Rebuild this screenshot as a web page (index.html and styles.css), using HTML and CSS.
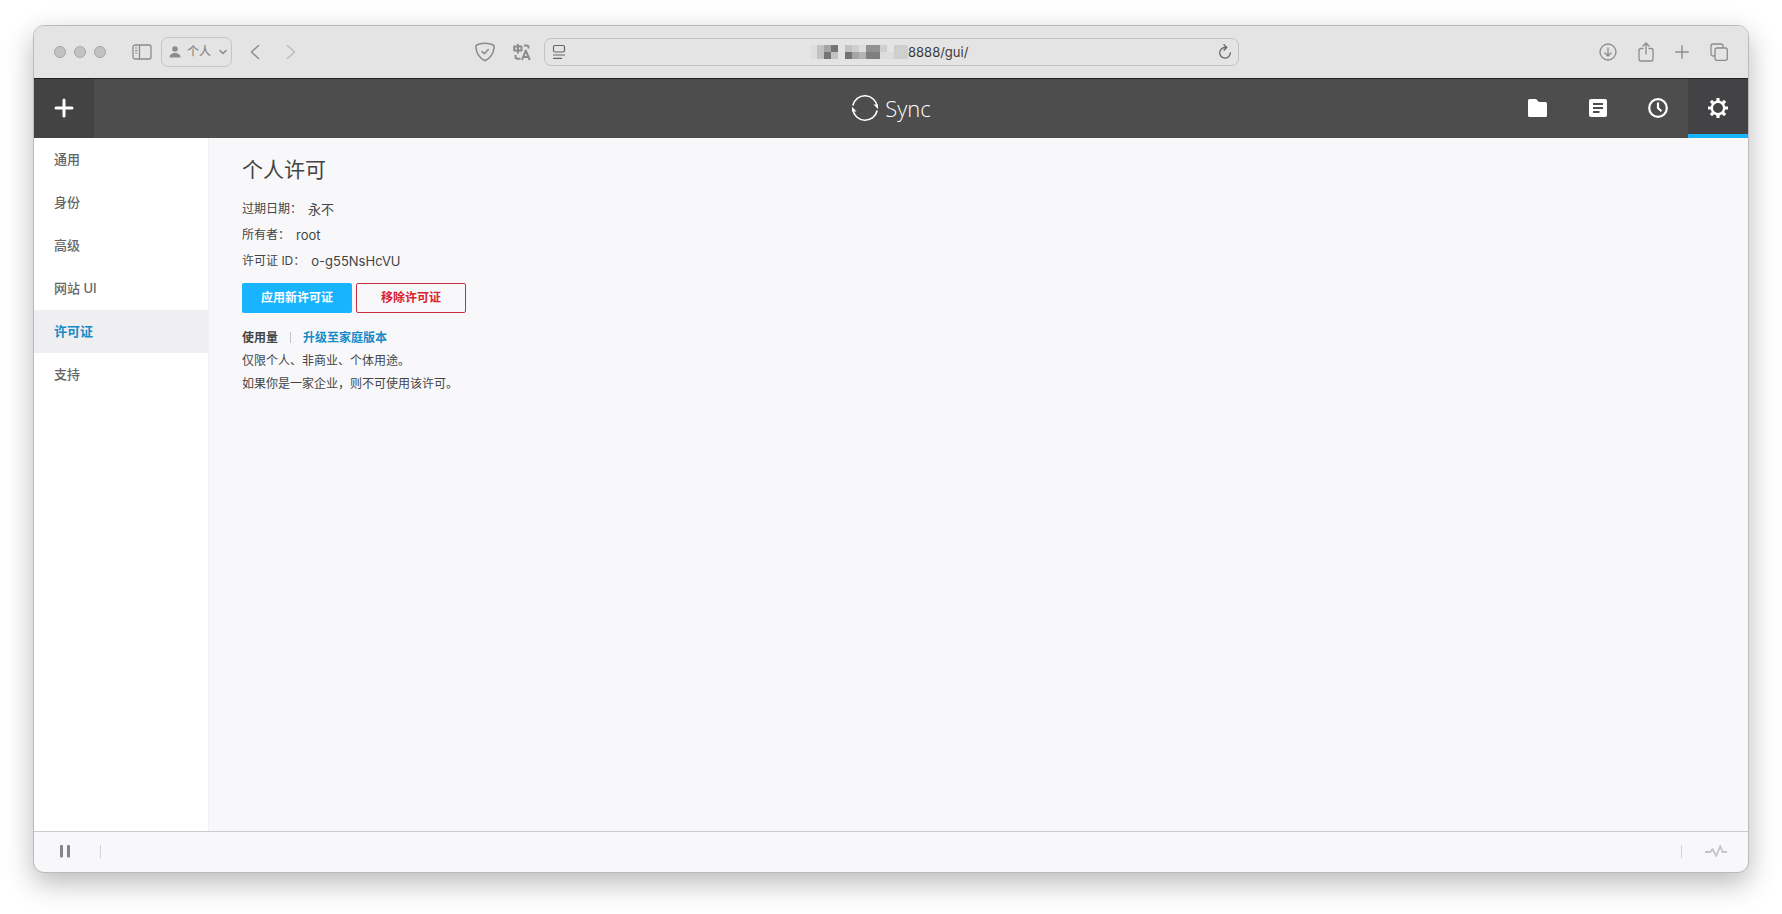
FILE: index.html
```html
<!DOCTYPE html>
<html lang="zh-CN">
<head>
<meta charset="utf-8">
<meta name="viewport" content="width=device-width, initial-scale=1">
<title>Sync</title>
<link rel="stylesheet" href="styles.css">
</head>
<body>
<div class="window">
  <header class="chrome">
    <div class="chrome-left">
      <div class="lights"><span class="light"></span><span class="light"></span><span class="light"></span></div>
      <button class="tool panel-toggle" type="button" aria-label="边栏">
        <svg width="20" height="16" viewBox="0 0 20 16" fill="none" stroke="currentColor"><rect x="1" y="1" width="18" height="14" rx="2" stroke-width="1.3"/><path d="M7.5 1v14" stroke-width="1.3"/><path d="M3 4h2.500M3 6.500h2.500M3 9h2.500"/></svg>
      </button>
      <button class="profile" type="button">
        <svg width="12" height="12" viewBox="0 0 12 12" fill="currentColor"><circle cx="6" cy="3" r="2.800"/><path d="M.5 11.500C.5 8.500 3 7 6 7s5.500 1.500 5.500 4.500z"/></svg>
        <span>个人</span>
        <svg class="caret" width="8" height="6" viewBox="0 0 8 6" fill="none" stroke="currentColor" stroke-width="1.5" stroke-linecap="round" stroke-linejoin="round"><path d="M1 1.500l3 3 3-3"/></svg>
      </button>
      <button class="tool back" type="button" aria-label="后退">
        <svg width="10" height="16" viewBox="0 0 10 16" fill="none" stroke="currentColor" stroke-width="1.5" stroke-linecap="round" stroke-linejoin="round"><path d="M8.500 1.500L1.500 8l7 6.500"/></svg>
      </button>
      <button class="tool forward" type="button" aria-label="前进" disabled>
        <svg width="10" height="16" viewBox="0 0 10 16" fill="none" stroke="currentColor" stroke-width="1.5" stroke-linecap="round" stroke-linejoin="round"><path d="M1.500 1.500L8.500 8l-7 6.500"/></svg>
      </button>
      <div class="extensions">
        <button class="tool" type="button" aria-label="隐私">
          <svg width="20" height="20" viewBox="0 0 20 20" fill="none" stroke="currentColor" stroke-width="1.600" stroke-linecap="round" stroke-linejoin="round"><path d="M10 1.200C7 1.200 3.800 1.800 1.800 3 .8 3.600.8 4.200.9 5.500 1.500 11.500 4.500 16 10 18.800c5.500-2.800 8.500-7.300 9.100-13.300.1-1.300.1-1.900-.9-2.500C16.200 1.800 13 1.200 10 1.200z"/><path d="M7 9.500l2.300 2.300L13.300 7.500"/></svg>
        </button>
        <button class="tool" type="button" aria-label="翻译">
          <svg width="18" height="18" viewBox="0 0 18 18" fill="none" stroke="currentColor" stroke-width="2" stroke-linejoin="round"><path d="M1.200 3.500h7.300v4H1.200zM4.900 1v9.500M11 2.500h2.500Q15.500 2.500 15.500 4.500v1M2.500 12v1.500Q2.500 15.800 4.500 15.800H7.500M9 17l3.700-9.500L16.800 17M10.300 14h5.200"/></svg>
        </button>
      </div>
    </div>
    <div class="address">
      <svg class="reader" width="14" height="16" viewBox="0 0 14 16" fill="none" stroke="currentColor" stroke-width="1.200" stroke-linecap="round"><rect x="1.500" y="1.500" width="11" height="6.500" rx="1.500"/><path d="M1.500 11h11M1.500 14.400h8"/></svg>
      <div class="location">
        <svg width="97" height="14" viewBox="0 0 97 14" shape-rendering="crispEdges"><path fill="#ddd" d="M0 0h6v14H0zM48 0h7v7h-7zM69 7h14v7H69z"/><path fill="#c2c2c2" d="M6 0h7v14H6zM20 7h7v7h-7zM34 0h7v7h-7z"/><path fill="#a5a5a5" d="M13 0h7v7h-7zM41 7h7v7h-7z"/><path fill="#747474" d="M20 0h7v7h-7zM13 7h7v7h-7zM34 7h7v7h-7z"/><path fill="#b4b4b4" d="M48 7h7v7h-7z"/><path fill="#929292" d="M55 0h14v7H55z"/><path fill="#7f7f7f" d="M55 7h14v7H55z"/><path fill="#cfcfcf" d="M41 0h7v7h-7zM69 0h7v7h-7zM83 0h14v14H83z"/></svg>
        <input class="url" type="text" aria-label="地址" value="8888/gui/">
      </div>
      <button class="tool reload" type="button" aria-label="重新载入">
        <svg width="14" height="16" viewBox="0 0 14 16" fill="none" stroke="currentColor" stroke-width="1.300" stroke-linecap="round" stroke-linejoin="round"><path d="M8 3.500H7A5.300 5.300 0 1 0 12.300 9M6 .8l2.800 2.700L6 6.200"/></svg>
      </button>
    </div>
    <div class="chrome-right">
      <button class="tool" type="button" aria-label="下载">
        <svg width="18" height="18" viewBox="0 0 18 18" fill="none" stroke="currentColor" stroke-width="1.300" stroke-linecap="round" stroke-linejoin="round"><circle cx="9" cy="9" r="8"/><path d="M9 4.800v8M6 10l3 3 3-3"/></svg>
      </button>
      <button class="tool share" type="button" aria-label="共享">
        <svg width="16" height="20" viewBox="0 0 16 20" fill="none" stroke="currentColor" stroke-width="1.300" stroke-linecap="round" stroke-linejoin="round"><path d="M5 6.500H3a2 2 0 0 0-2 2V17a2 2 0 0 0 2 2h10a2 2 0 0 0 2-2V8.500a2 2 0 0 0-2-2h-2M8 12V1.200M5 4l3-3 3 3"/></svg>
      </button>
      <button class="tool" type="button" aria-label="新标签页">
        <svg width="14" height="14" viewBox="0 0 14 14" fill="none" stroke="currentColor" stroke-width="1.400" stroke-linecap="round"><path d="M7 .7v12.600M.7 7h12.600"/></svg>
      </button>
      <button class="tool" type="button" aria-label="标签页概览">
        <svg width="18" height="18" viewBox="0 0 18 18" fill="none" stroke="currentColor" stroke-width="1.300"><rect x="5" y="5" width="12.300" height="12.300" rx="2"/><path d="M5 13H3a2 2 0 0 1-2-2V3a2 2 0 0 1 2-2h8a2 2 0 0 1 2 2v2"/></svg>
      </button>
    </div>
  </header>

  <div class="appbar">
    <button class="add" type="button" aria-label="添加">
      <svg width="20" height="20" viewBox="0 0 20 20" stroke="currentColor" stroke-width="3" stroke-linecap="round"><path d="M10 2v16M2 10h16"/></svg>
    </button>
    <div class="brand">
      <svg width="28" height="28" viewBox="0 0 28 28" fill="none" stroke="currentColor" stroke-width="1.600"><path d="M1.800 11.500A12.400 12.400 0 0 1 26.200 12.500M26.200 16.500A12.400 12.400 0 0 1 1.800 15.500"/><path d="M22.500 10.500l4.500 0v4.500zM1 12.700v4.800h4.500z" fill="currentColor" stroke="none"/></svg>
      <span>Sync</span>
    </div>
    <nav class="tabs" aria-label="主导航">
      <a class="tab" href="#folders" aria-label="文件夹"><svg width="20" height="20" viewBox="0 0 20 20" fill="currentColor"><path d="M1.500 1H8l3 3h6.500A1.500 1.500 0 0 1 19 5.500v12a1.500 1.500 0 0 1-1.500 1.500h-16A1.500 1.500 0 0 1 0 17.500V2.500A1.500 1.500 0 0 1 1.500 1z"/></svg></a>
      <a class="tab" href="#list" aria-label="列表"><svg width="20" height="20" viewBox="0 0 20 20"><rect x="1" y="1" width="18" height="18" rx="2" fill="currentColor"/><path d="M5 6h10M5 10h10M5 14h6.500" stroke="#4d4d4d" stroke-width="1.800"/></svg></a>
      <a class="tab" href="#history" aria-label="历史"><svg width="20" height="20" viewBox="0 0 20 20" fill="none" stroke="currentColor"><circle cx="10" cy="10" r="8.800" stroke-width="2.200"/><path d="M10 4.500V10l3.500 3.300" stroke-width="2.200"/></svg></a>
      <a class="tab active" href="#settings" aria-label="设置" aria-current="page"><svg width="20" height="20" viewBox="0 0 20 20" fill="none" stroke="currentColor"><circle cx="10" cy="10" r="6.200" stroke-width="2.400"/><path d="M10 0v3M10 17v3M0 10h3M17 10h3M2.900 2.900l2.200 2.200M14.900 14.900l2.200 2.200M2.900 17.100l2.200-2.200M14.900 5.100l2.200-2.200" stroke-width="3.200"/></svg></a>
    </nav>
  </div>

  <div class="body">
    <nav class="sidebar" aria-label="设置">
      <a class="side-link" href="#general">通用</a>
      <a class="side-link" href="#identity">身份</a>
      <a class="side-link" href="#advanced">高级</a>
      <a class="side-link" href="#webui">网站 UI</a>
      <a class="side-link selected" href="#license" aria-current="page">许可证</a>
      <a class="side-link" href="#support">支持</a>
    </nav>
    <main class="content">
      <h1 class="title">个人许可</h1>
      <dl class="details">
        <div class="detail"><dt>过期日期：</dt><dd>永不</dd></div>
        <div class="detail"><dt>所有者：</dt><dd>root</dd></div>
        <div class="detail"><dt>许可证 ID：</dt><dd>o-g55NsHcVU</dd></div>
      </dl>
      <div class="actions">
        <button class="btn primary" type="button">应用新许可证</button>
        <button class="btn danger" type="button">移除许可证</button>
      </div>
      <div class="usage">
        <div class="usage-head"><strong>使用量</strong><span class="bar"></span><a class="upgrade" href="#upgrade">升级至家庭版本</a></div>
        <p>仅限个人、非商业、个体用途。</p>
        <p>如果你是一家企业，则不可使用该许可。</p>
      </div>
    </main>
  </div>

  <footer class="status">
    <div class="status-group">
      <button class="pause" type="button" aria-label="暂停"><svg width="12" height="14" viewBox="0 0 12 14" fill="currentColor"><rect x="1" y="1" width="3" height="12.500" rx="1"/><rect x="8" y="1" width="3" height="12.500" rx="1"/></svg></button>
      <span class="rule"></span>
    </div>
    <div class="status-group">
      <span class="rule"></span>
      <button class="activity" type="button" aria-label="活动"><svg width="22" height="14" viewBox="0 0 22 14" fill="none" stroke="currentColor" stroke-width="1.800" stroke-linejoin="round"><path d="M0 8h5.500L7.500 5l3.700 7L15.300 2l2.200 6H22"/></svg></button>
    </div>
  </footer>
</div>
</body>
</html>
```

FILE: styles.css
```css
* { box-sizing: border-box; }

body {
  margin: 0;
  padding: 25px 33px 41px;
  min-height: 100vh;
  display: flex;
  background: #fff;
  color: #444;
  font: 12px/22px Inter, "Noto Sans CJK SC", sans-serif;
}

button { font: inherit; color: inherit; border: 0; padding: 0; background: none; }
a { text-decoration: none; color: inherit; }
svg { display: block; flex: none; }
p, h1, dl, dd { margin: 0; }

.window {
  flex: 1;
  min-width: 0;
  display: flex;
  flex-direction: column;
  border: 1px solid #bbb;
  border-radius: 11px;
  overflow: hidden;
  background: #f8f8fa;
  box-shadow: 0 10px 28px rgba(0, 0, 0, 0.28);
}

.chrome {
  height: 53px;
  display: grid;
  grid-template-columns: 1fr minmax(0, 695px) 1fr;
  align-items: center;
  background: #e4e4e4;
  border-bottom: 1px solid #222;
  color: #8c8c8c;
}

.chrome-left { display: flex; align-items: center; padding: 0 13px 0 20px; }
.lights { display: flex; gap: 8px; }
.light { width: 12px; height: 12px; border-radius: 50%; background: #c2c2c2; border: 1px solid #a6a6a6; }
.panel-toggle { margin-left: 26px; }

.profile {
  display: flex;
  align-items: center;
  gap: 6px;
  width: 71px;
  height: 30px;
  margin: 0 18px 0 9px;
  padding: 0 4px 0 7px;
  border: 1px solid #c4c4c4;
  border-radius: 7px;
  font-size: 12px;
  font-weight: 500;
}
.caret { margin-left: auto; }
.forward { margin-left: 26px; color: #bcbcbc; }
.extensions { display: flex; align-items: center; gap: 18px; margin-left: auto; }

.address {
  display: flex;
  align-items: center;
  height: 28px;
  padding: 0 6px 0 7px;
  border: 1px solid #c2c2c2;
  border-radius: 7px;
  color: #666;
}
.location { flex: 1; display: flex; align-items: center; justify-content: center; }
.url {
  width: 64px;
  height: 20px;
  border: 0;
  padding: 0;
  background: none;
  color: #3c3c3c;
  font: 13px/20px Inter, "Noto Sans CJK SC", sans-serif;
}

.chrome-right { display: flex; align-items: center; justify-content: flex-end; gap: 21px; padding-right: 20px; }

.appbar {
  height: 59px;
  display: grid;
  grid-template-columns: 1fr auto 1fr;
  background: #4d4d4d;
  color: #fff;
}
.add { width: 60px; display: grid; place-items: center; padding-bottom: 2px; background: #434343; }
.brand { display: flex; align-items: center; gap: 6px; padding-bottom: 2px; font: 300 22px/28px "Open Sans", sans-serif; }
.tabs { display: flex; justify-content: flex-end; }
.tab { width: 60px; display: grid; place-items: center; border-top: 2px solid transparent; border-bottom: 4px solid transparent; }
.tab.active { background: #434345; border-top-color: #434345; border-bottom-color: #18b4ff; }

.body { flex: 1; display: flex; }
.sidebar { width: 175px; background: #fff; border-right: 1px solid #f1f1f3; }
.side-link {
  display: block;
  height: 43px;
  padding-left: 20px;
  font-size: 13px;
  font-weight: 500;
  line-height: 43px;
  color: #666;
}
.side-link.selected { background: #efeff1; color: #158bc7; font-weight: 700; }

.content { flex: 1; padding: 16px 33px; }
.title { font-size: 21px; line-height: 32px; font-weight: 400; }
.details { margin-top: 10px; }
.detail { display: flex; gap: 6px; line-height: 26px; }
.detail dd { font-size: 13px; }
.actions { display: flex; gap: 4px; margin-top: 9px; }
.btn { width: 110px; height: 30px; border-radius: 2px; font-size: 12px; font-weight: 700; line-height: 28px; }
.primary { background: #18b4ff; color: #fff; }
.danger { border: 1px solid #c9303e; color: #d9222f; }

.usage { margin-top: 13px; line-height: 23px; }
.usage-head { display: flex; align-items: center; }
.bar { width: 1px; height: 11px; margin: 0 12px; background: #c4c4c4; }
.upgrade { color: #158bc7; font-weight: 700; }

.status {
  height: 41px;
  display: flex;
  justify-content: space-between;
  border-top: 1px solid #ccc;
  padding-bottom: 2px;
}
.status-group { display: flex; align-items: center; }
.pause { width: 66px; padding-left: 25px; color: #858587; }
.activity { width: 66px; padding-left: 23px; color: #c4c4c6; }
.rule { width: 1px; height: 13px; background: #d4d4d6; }
```
